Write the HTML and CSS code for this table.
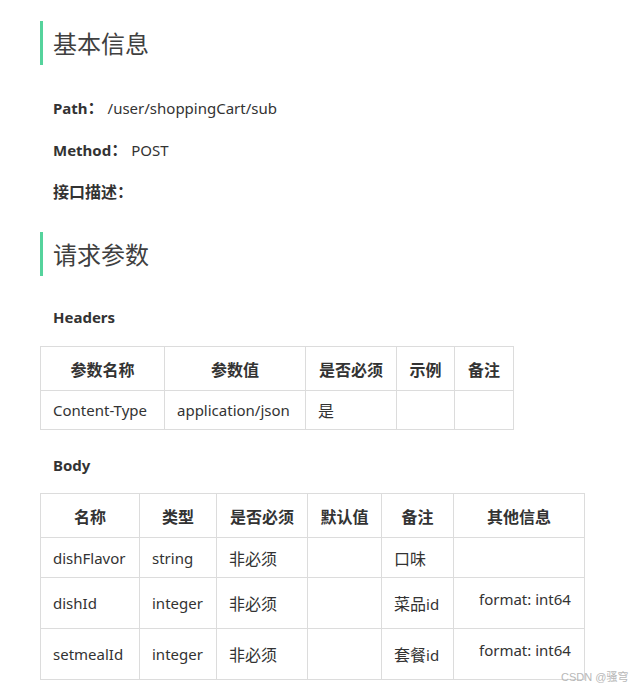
FILE: index.html
```html
<!DOCTYPE html>
<html lang="zh">
<head>
<meta charset="utf-8">
<link rel="stylesheet" href="styles.css">
</head>
<body>
<div class="doc">
  <h2 class="sec first">基本信息</h2>
  <p class="kv"><b>Path<span class="zh">：</span></b><span class="val">/user/shoppingCart/sub</span></p>
  <p class="kv"><b>Method<span class="zh">：</span></b><span class="val">POST</span></p>
  <p class="kv"><b class="zh">接口描述：</b></p>

  <h2 class="sec second">请求参数</h2>
  <h4 class="sub">Headers</h4>
  <table class="t t1">
    <colgroup><col class="c1"><col class="c2"><col class="c3"><col class="c4"><col class="c5"></colgroup>
    <thead><tr><th class="zh">参数名称</th><th class="zh">参数值</th><th class="zh">是否必须</th><th class="zh">示例</th><th class="zh">备注</th></tr></thead>
    <tbody><tr><td>Content-Type</td><td>application/json</td><td class="zh">是</td><td></td><td></td></tr></tbody>
  </table>

  <h4 class="sub body-title">Body</h4>
  <table class="t t2">
    <colgroup><col class="d1"><col class="d2"><col class="d3"><col class="d4"><col class="d5"><col class="d6"></colgroup>
    <thead><tr><th class="zh">名称</th><th class="zh">类型</th><th class="zh">是否必须</th><th class="zh">默认值</th><th class="zh">备注</th><th class="zh">其他信息</th></tr></thead>
    <tbody>
      <tr class="r1"><td>dishFlavor</td><td>string</td><td class="zh">非必须</td><td></td><td class="zh">口味</td><td></td></tr>
      <tr class="r2"><td>dishId</td><td>integer</td><td class="zh">非必须</td><td></td><td><span class="zh">菜品</span>id</td><td class="fmt"><div>format: int64</div></td></tr>
      <tr class="r2"><td>setmealId</td><td>integer</td><td class="zh">非必须</td><td></td><td><span class="zh">套餐</span>id</td><td class="fmt"><div>format: int64</div></td></tr>
    </tbody>
  </table>
</div>
<div class="wm">CSDN @骚穹</div>
</body>
</html>
```
FILE: styles.css
```css
html, body {
  margin: 0;
  padding: 0;
  background: #fff;
}
body {
  font-family: "Noto Sans", "Noto Sans CJK SC", sans-serif;
  color: #333;
  font-size: 15px;
  position: relative;
  width: 644px;
  height: 691px;
  overflow: hidden;
}
.zh {
  font-family: "Noto Sans CJK SC", sans-serif;
  font-size: 16px;
}
.doc {
  padding-left: 40px;
  padding-top: 21px;
}
.sec {
  margin: 0;
  height: 44px;
  line-height: 44px;
  border-left: 3px solid #55d39c;
  padding-left: 10px;
  font-size: 24px;
  font-weight: normal;
  color: #404040;
  font-family: "Noto Sans CJK SC", sans-serif;
}
.sec.first {
  margin-bottom: 31px;
}
.kv {
  margin: 0 0 20px 13px;
  line-height: 22px;
  height: 22px;
  font-size: 15px;
}
.kv b {
  font-weight: bold;
}
.kv .val {
  margin-left: 4px;
}
.sec.second {
  margin-top: 30px;
  margin-bottom: 30px;
}
.sub {
  margin: 0 0 18px 13px;
  line-height: 22px;
  height: 22px;
  font-size: 15px;
  font-weight: bold;
}
.body-title {
  margin-top: 24px;
  margin-bottom: 17px;
}
.t {
  border-collapse: collapse;
  table-layout: fixed;
  font-size: 15px;
}
.t th, .t td {
  border: 1px solid #dcdcdc;
  padding: 0 12px;
  text-align: left;
  white-space: nowrap;
  overflow: hidden;
}
.t th {
  text-align: center;
  font-weight: bold;
  height: 43px;
}
.t1 { width: 474px; }
.t1 .c1 { width: 124px; }
.t1 .c2 { width: 141px; }
.t1 .c3 { width: 91px; }
.t1 .c4 { width: 58px; }
.t1 .c5 { width: 59px; }
.t1 th { height: 43px; }
.t1 td { height: 38px; }

.t2 { width: 545px; }
.t2 .d1 { width: 99px; }
.t2 .d2 { width: 77px; }
.t2 .d3 { width: 91px; }
.t2 .d4 { width: 74px; }
.t2 .d5 { width: 72px; }
.t2 .d6 { width: 131px; }
.t2 th { height: 43px; }
.t2 .r1 td { height: 39px; }
.t2 .r2 td { height: 50px; }
.t2 td.fmt {
  vertical-align: top;
  padding-left: 25px;
}
.t2 td.fmt div {
  padding-top: 9px;
  line-height: 24px;
}
.wm {
  position: absolute;
  left: 561px;
  top: 668px;
  font-size: 11px;
  color: #b8b8b8;
  font-family: "Liberation Sans", "Noto Sans CJK SC", sans-serif;
}
```
